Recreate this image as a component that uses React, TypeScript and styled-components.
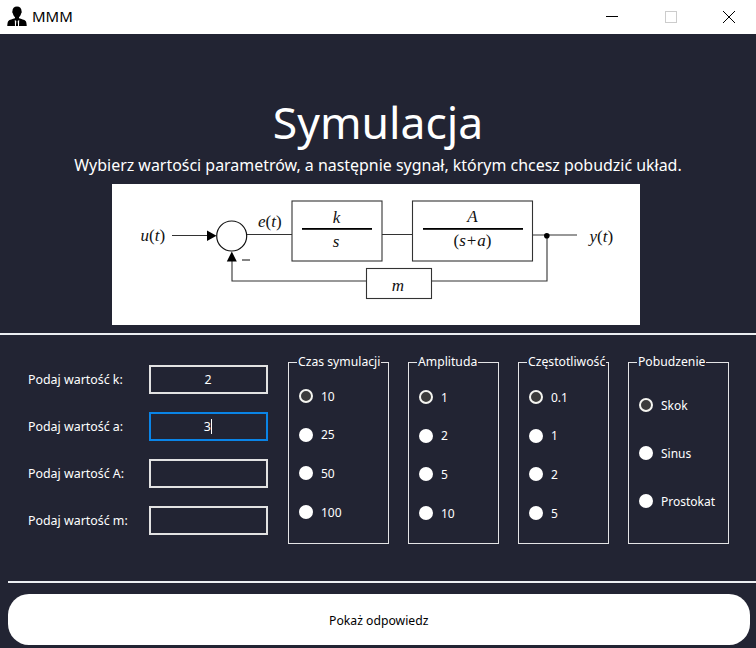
import React from "react";
import styled, { createGlobalStyle } from "styled-components";

const Global = createGlobalStyle`
  html, body { margin: 0; padding: 0; background: #222433; }
  * { box-sizing: border-box; }
`;

const Win = styled.div`
  width: 756px;
  height: 648px;
  overflow: hidden;
  background: #222433;
  color: #fff;
  font-family: "Noto Sans", "Open Sans", sans-serif;
  display: flex;
  flex-direction: column;
`;
const TitleBar = styled.header`
  height: 34px;
  background: #fff;
  color: #000;
  display: flex;
  align-items: center;
  padding: 0 21px 3px 7px;
`;
const AppName = styled.span`
  font-size: 15px;
  margin-left: 5px;
  flex: 1;
`;
const Controls = styled.div`
  display: flex;
  gap: 46.5px;
  align-items: center;
  padding-top: 3px;
`;
const Hero = styled.section`
  display: flex;
  flex-direction: column;
  align-items: center;
  padding-top: 58px;
`;
const Title = styled.h1`
  margin: 0;
  font-size: 44.5px;
  font-weight: 400;
  line-height: 60px;
`;
const Subtitle = styled.p`
  margin: 0;
  font-size: 15.95px;
  line-height: 22px;
  height: 32px;
  padding-top: 2px;
`;
const Diagram = styled.svg`
  display: block;
  align-self: flex-start;
  margin-left: 112px;
  width: 528px;
  height: 141px;
  background: #fff;
`;
const Divider = styled.hr<{ $inset?: number; $top: number }>`
  margin: ${(p) => p.$top}px 0 0 ${(p) => p.$inset ?? 0}px;
  border: 0;
  height: 2px;
  background: #eceef2;
`;
const Form = styled.section`
  display: flex;
  padding: 17px 0 0 28px;
`;
const Fields = styled.div`
  width: 239.5px;
  padding-top: 12.5px;
  display: flex;
  flex-direction: column;
  gap: 18px;
`;
const FieldRow = styled.div`
  display: flex;
  align-items: center;
  height: 29px;
`;
const FieldLabel = styled.label`
  width: 120.5px;
  font-size: 12.4px;
`;
const Field = styled.div<{ $focused?: boolean }>`
  width: 119px;
  height: 29px;
  border: 2px solid ${(p) => (p.$focused ? "#0a84e6" : "#e2e2e2")};
  display: flex;
  align-items: center;
  justify-content: center;
  font-size: 12.4px;
`;
const Caret = styled.span`
  display: inline-block;
  width: 1px;
  height: 15px;
  background: #fff;
  margin-left: 0.5px;
`;
const Groups = styled.div`
  display: flex;
  gap: 19px;
  margin-left: 20.5px;
`;
const Group = styled.fieldset<{ $w: number; $gap: number; $top: number }>`
  width: ${(p) => p.$w}px;
  min-width: 0;
  height: 192px;
  margin: 0;
  padding: ${(p) => p.$top}px 0 0 10px;
  border: 1px solid #e4e4e6;
  display: flex;
  flex-direction: column;
  gap: ${(p) => p.$gap}px;
`;
const Legend = styled.legend`
  margin-left: -2px;
  padding: 0 1px;
  font-size: 12.2px;
  line-height: 20px;
  white-space: nowrap;
`;
const Option = styled.label`
  display: flex;
  align-items: center;
  height: 16px;
  font-size: 12px;
`;
const Radio = styled.input`
  appearance: none;
  width: 14px;
  height: 14px;
  margin: 0 8px 0 0;
  border-radius: 50%;
  background: #fff;
  border: 2px solid #fff;
  &:checked { background: #3c3c3c; border-color: #f4f4f0; }
`;
const Submit = styled.button`
  display: block;
  width: 741.5px;
  height: 51px;
  margin: 11px 0 0 8px;
  padding: 2px 0 0;
  border: 0;
  border-radius: 21px;
  background: #fff;
  color: #000;
  font-family: "Noto Sans", "Open Sans", sans-serif;
  font-size: 12.2px;
`;

const UserIcon = () => (
  <svg width="20" height="20" viewBox="0 0 22 22" aria-hidden="true">
    <path fill="#000" d="M11 0.5c3.2 0 5 2 5 5 0 .6.3.7.2 1.5-.1.7-.4 1-.7 1.3-.4 2-1.3 3.4-2.3 4v1.3c2.5.8 6 1.6 7.3 3 .8 1 1 3 1.2 5.4H.3c.2-2.4.4-4.4 1.2-5.4 1.3-1.4 4.8-2.2 7.3-3v-1.3c-1-.6-1.9-2-2.3-4-.3-.3-.6-.6-.7-1.3-.1-.8.2-.9.2-1.5 0-3 1.8-5 5-5z" />
    <path fill="#fff" d="M8.6 15.4 10.2 16.4 9.8 22H8.8zM13.4 15.4 11.8 16.4 12.2 22h1z" />
  </svg>
);

const GROUPS = [
  { title: "Czas symulacji", w: 101, gap: 22.7, top: 16, items: ["10", "25", "50", "100"] },
  { title: "Amplituda", w: 91, gap: 22.7, top: 17, items: ["1", "2", "5", "10"] },
  { title: "Częstotliwość", w: 91, gap: 22.7, top: 17, items: ["0.1", "1", "2", "5"] },
  { title: "Pobudzenie", w: 101, gap: 32, top: 25, items: ["Skok", "Sinus", "Prostokat"] },
];

const FIELDS = [
  { label: "Podaj wartość k:", value: "2" },
  { label: "Podaj wartość a:", value: "3", focused: true },
  { label: "Podaj wartość A:", value: "" },
  { label: "Podaj wartość m:", value: "" },
];

const serif = { fontFamily: '"Liberation Serif", serif', fontSize: 17, fill: "#111" };
const Math_ = ({ x, y, anchor, children }: { x: number; y: number; anchor?: "middle"; children: React.ReactNode }) => (
  <text x={x} y={y} textAnchor={anchor} fontStyle="italic" style={serif}>
    {children}
  </text>
);
const Up = ({ children, dx }: { children: React.ReactNode; dx?: number }) => (
  <tspan fontStyle="normal" dx={dx}>{children}</tspan>
);

const BlockDiagram = () => (
  <Diagram viewBox="112 184 528 141" role="img">
    <g fill="none" stroke="#333" strokeWidth="1.1">
      <path d="M172 235.5H208M247 234.5H292M382 234.5H412M533 235H577M547 235V281H431M366 281H232V260" />
      <circle cx="231.7" cy="236" r="15" stroke="#111" strokeWidth="1.2" />
      <rect x="292" y="201" width="90" height="60" />
      <rect x="412.5" y="201" width="120" height="60" />
      <rect x="366.5" y="268.5" width="65" height="30" />
      <path d="M242 260H250" stroke="#333" strokeWidth="1.2" />
    </g>
    <g fill="#000">
      <path d="M207 230.5 216.5 235.8 207 241zM226.8 261.5 231.8 251.5 236.8 261.5z" />
      <circle cx="546.8" cy="235.8" r="2.8" />
      <rect x="302" y="228" width="70" height="1.8" />
      <rect x="423" y="228" width="100" height="1.8" />
    </g>
    <Math_ x={140.5} y={241}>u<Up>(</Up>t<Up>)</Up></Math_>
    <Math_ x={258} y={227}>e<Up>(</Up>t<Up>)</Up></Math_>
    <Math_ x={336.5} y={223} anchor="middle">k</Math_>
    <Math_ x={336} y={247} anchor="middle">s</Math_>
    <Math_ x={472.5} y={222} anchor="middle">A</Math_>
    <Math_ x={472.5} y={246} anchor="middle"><Up>(</Up>s<Up dx={1}>+</Up><tspan dx={1}>a</tspan><Up>)</Up></Math_>
    <Math_ x={398} y={291} anchor="middle">m</Math_>
    <Math_ x={589.5} y={242}>y<Up>(</Up>t<Up>)</Up></Math_>
  </Diagram>
);

export default function App() {
  return (
    <Win>
      <Global />
      <TitleBar>
        <UserIcon />
        <AppName>MMM</AppName>
        <Controls>
          <svg width="12" height="12" viewBox="0 0 12 12" aria-hidden="true"><path d="M0 5.5H12" stroke="#000" /></svg>
          <svg width="12" height="12" viewBox="0 0 12 12" aria-hidden="true"><rect x=".5" y=".5" width="11" height="11" fill="none" stroke="#ccc" /></svg>
          <svg width="12" height="12" viewBox="0 0 12 12" aria-hidden="true"><path d="M0 0 12 12M12 0 0 12" stroke="#000" /></svg>
        </Controls>
      </TitleBar>
      <Hero>
        <Title>Symulacja</Title>
        <Subtitle>Wybierz wartości parametrów, a następnie sygnał, którym chcesz pobudzić układ.</Subtitle>
        <BlockDiagram />
      </Hero>
      <Divider $top={8} />
      <Form>
        <Fields>
          {FIELDS.map((f) => (
            <FieldRow key={f.label}>
              <FieldLabel>{f.label}</FieldLabel>
              <Field $focused={f.focused}>
                {f.value}
                {f.focused && <Caret />}
              </Field>
            </FieldRow>
          ))}
        </Fields>
        <Groups>
          {GROUPS.map((g) => (
            <Group key={g.title} $w={g.w} $gap={g.gap} $top={g.top}>
              <Legend>{g.title}</Legend>
              {g.items.map((item, i) => (
                <Option key={item}>
                  <Radio type="radio" name={g.title} defaultChecked={i === 0} />
                  {item}
                </Option>
              ))}
            </Group>
          ))}
        </Groups>
      </Form>
      <Divider $top={37} $inset={8} />
      <Submit type="button">Pokaż odpowiedz</Submit>
    </Win>
  );
}
